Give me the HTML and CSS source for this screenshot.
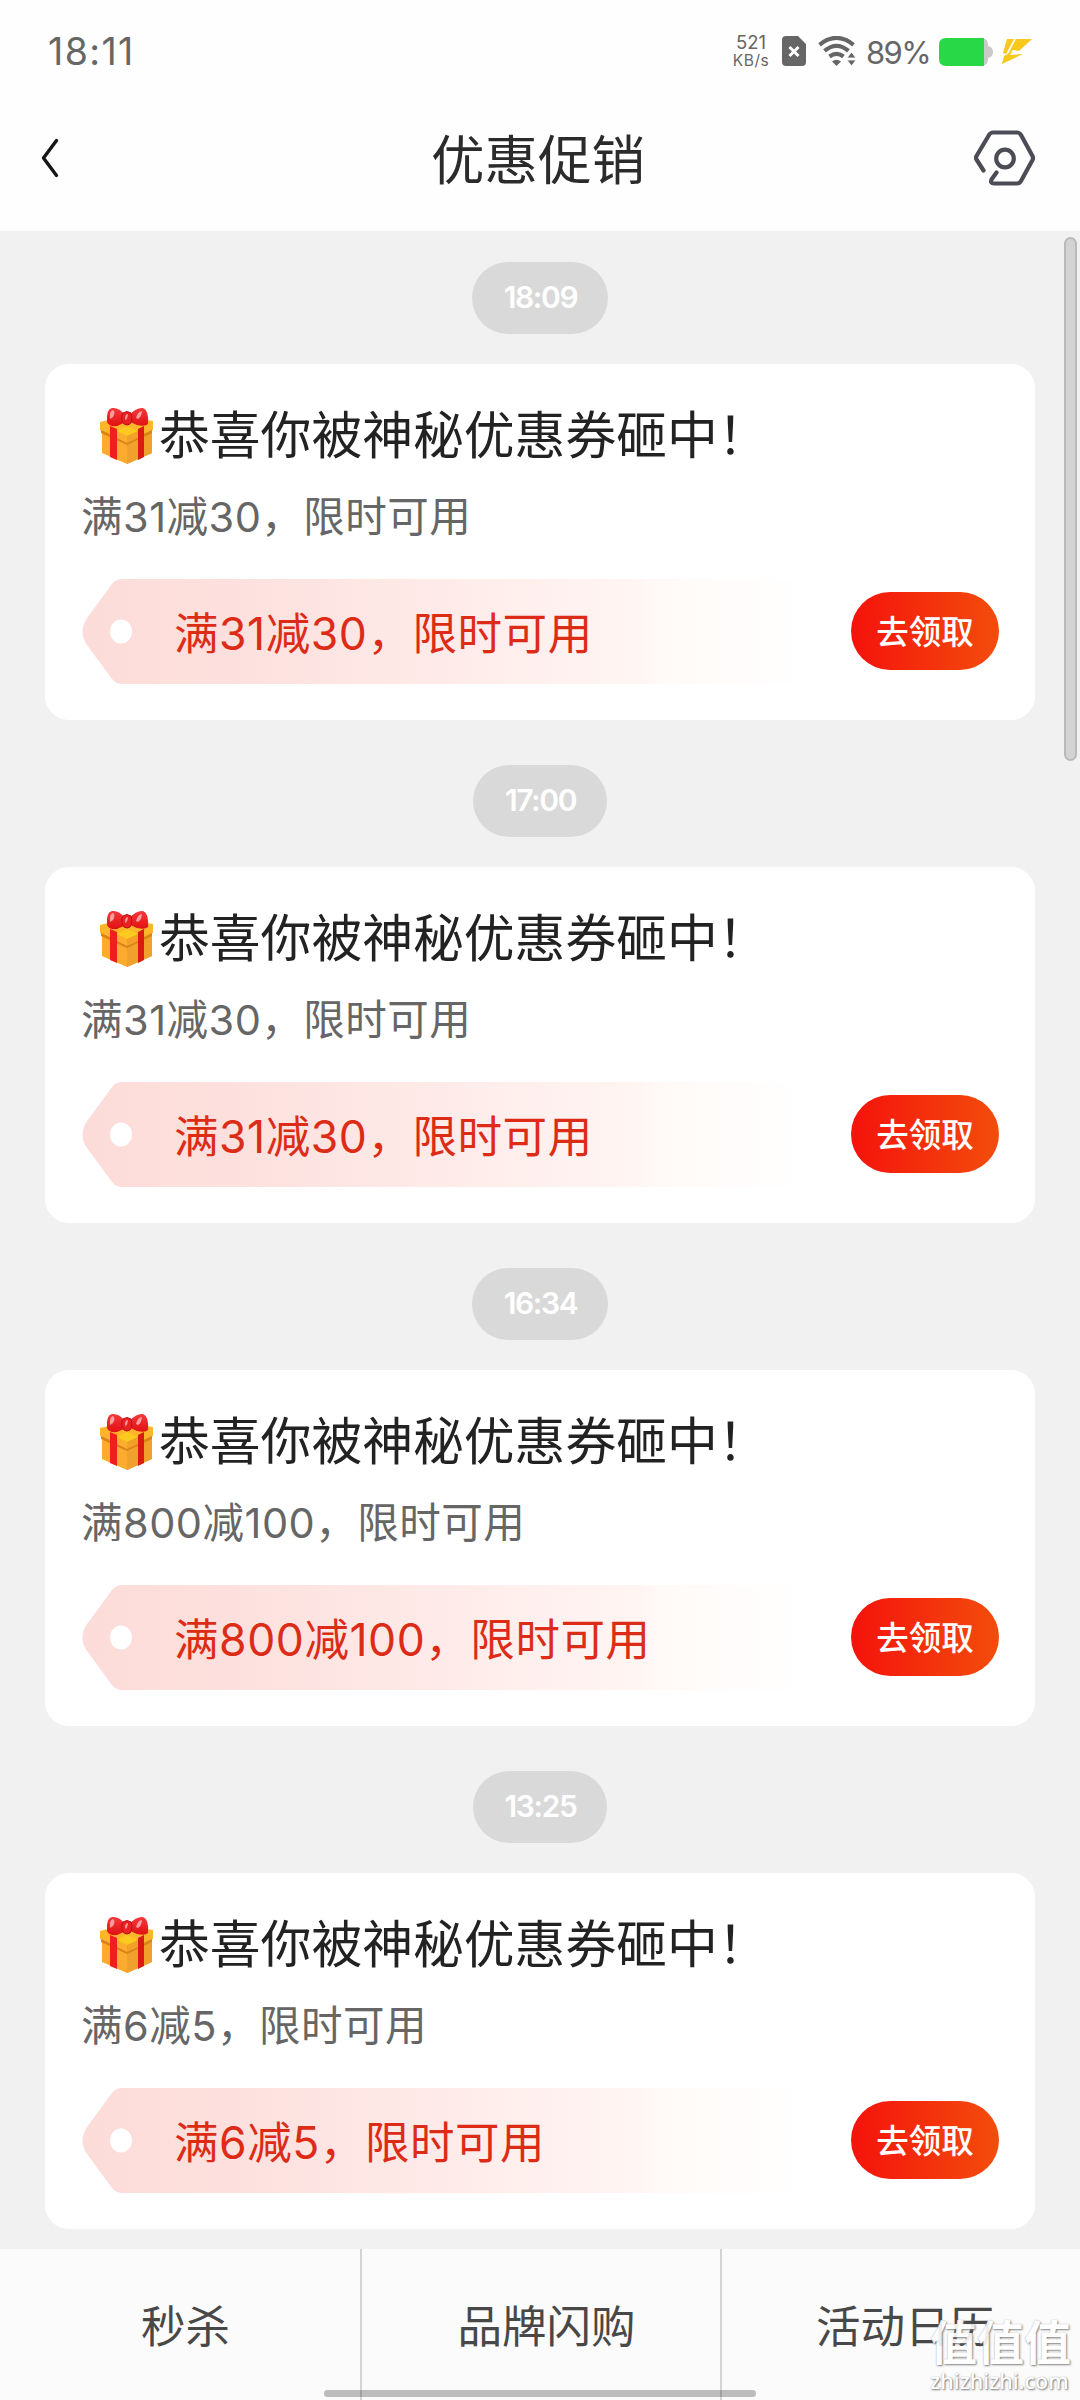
FILE: index.html
```html
<!DOCTYPE html>
<html lang="zh-CN">
<head>
<meta charset="utf-8">
<title>优惠促销</title>
<link rel="stylesheet" href="styles.css">
</head>
<body>
<svg class="defs" width="0" height="0" aria-hidden="true">
  <defs>
    <linearGradient id="fade" x1="0" x2="1" y1="0" y2="0">
      <stop offset="0" stop-color="#fcdcd9"/>
      <stop offset=".2" stop-color="#fde0dd"/>
      <stop offset=".5" stop-color="#feebe9"/>
      <stop offset=".76" stop-color="#fff5f3"/>
      <stop offset=".8" stop-color="#fffaf8"/>
      <stop offset="1" stop-color="#ffffff"/>
    </linearGradient>
    <linearGradient id="bow" x1="0" x2="0" y1="0" y2="1">
      <stop offset="0" stop-color="#f53a3c"/>
      <stop offset="1" stop-color="#e01012"/>
    </linearGradient>
    <symbol id="gift" viewBox="0 0 54 58">
      <path d="M2 20 27 10 52 20V46L27 57 2 46Z" fill="#fbac2c"/>
      <path d="M27 30V57L52 46V20Z" fill="#f0a02c"/>
      <path d="M0 15 24 9 53 14V23L27 35 0 23Z" fill="#fdb52b"/>
      <path d="M1 23 27 35 52 23V26L27 38 1 26Z" fill="#d98318"/>
      <path d="M10 19 17 22V53L10 50Z" fill="#f01f1b"/>
      <path d="M38 22 44 19V50L38 53Z" fill="#d91a17"/>
      <path d="M17 24 27 19 38 24 27 29Z" fill="#ffca1f"/>
      <path d="M17 24 27 29V36L17 31Z" fill="#fbae2c"/>
      <path d="M38 24 27 29V36L38 31Z" fill="#f3a029"/>
      <path d="M7 15Q6 2 12 1 19 0 25 8L29 8Q37 0 43 1 49 3 48 17 45 20 37 18L28 14 17 19Q9 20 7 15Z" fill="url(#bow)"/>
      <path d="M23 6Q27 3 31 6 33 13 30 17 27 19 24 17 20 12 23 6Z" fill="#ea2224" stroke="#bd1015" stroke-width="1"/>
      <path d="M10 12Q9 4 13 3 16 5 13 10ZM36 11Q38 4 42 4 42 9 38 12ZM25 12Q25 7 28 7 28 10 26 13Z" fill="#ff9c9d"/>
    </symbol>
    <symbol id="tag" viewBox="0 0 728 105">
      <path d="M40 0H728V105H40Q34 105 30 100L5 66Q-4 53 5 39L30 5Q34 0 40 0Z" fill="url(#fade)"/>
      <ellipse cx="39" cy="52.500" rx="11" ry="12" fill="#fff"/>
    </symbol>
  </defs>
</svg>

<div class="screen">
  <header class="top">
    <div class="status">
      <span class="clock">18:11</span>
      <div class="indicators">
        <div class="speed"><span>521</span><span class="unit">KB/s</span></div>
        <svg class="sim" viewBox="0 0 24 30"><path d="M4 0H16L24 8V26Q24 30 20 30H4Q0 30 0 26V4Q0 0 4 0Z" fill="#666"/><path d="M7.500 11 16.500 20M16.500 11 7.500 20" stroke="#fff" stroke-width="3"/></svg>
        <svg class="wifi" viewBox="0 0 38 30"><g fill="none" stroke="#666" stroke-width="4.200"><path d="M1.500 8.800Q18.500-5 35.500 8.800"/><path d="M6.500 14.800Q18.500 4.800 30.500 14.800"/><path d="M11.500 20.500Q18.500 15.300 25.500 20.500"/></g><path d="M14 25.500Q18.500 22 23 25.500L18.500 30Z" fill="#666"/><path d="M29 22H38L33.500 16ZM29 24H38L33.500 30Z" fill="#666" stroke="#fff" stroke-width=".8"/></svg>
        <span class="percent">89%</span>
        <svg class="battery" viewBox="0 0 54 28"><path d="M42 0Q49 0 49 7V8Q54 9 54 14T49 20V21Q49 28 42 28Z" fill="#c9c9c9"/><path d="M7 0H45V28H7Q0 28 0 21V7Q0 0 7 0Z" fill="#28d846"/></svg>
        <svg class="bolt" viewBox="0 0 30 25"><path d="M5 0H12L4 15 1 14ZM14 0H30L17 12 11 11 6 15ZM0 25 2 17 11 12 8 16 21 15Z" fill="#f8c81c"/></svg>
      </div>
    </div>
    <div class="navbar">
      <svg class="back" viewBox="0 0 20 42"><path d="M16.500 3.500 3.500 21 16.500 38.500" fill="none" stroke="#161616" stroke-width="3.400" stroke-linecap="round" stroke-linejoin="round"/></svg>
      <h1>优惠促销</h1>
      <svg class="settings" viewBox="0 0 62 56"><g fill="none" stroke="#4b4c55" stroke-width="4.200" stroke-linecap="round" stroke-linejoin="round"><path d="M9.500 40.500 2.500 29.500Q1.500 28 2.500 26L15 5Q16.500 2.500 19 2.500H43Q45.500 2.500 47 5L58.500 26Q59.500 28 58.500 30L47 51Q45.500 53.500 43 53.500H20Q16 53.500 17.500 49.500L22.500 42.500"/><circle cx="31" cy="28.500" r="8.800"/></g></svg>
    </div>
  </header>

  <main class="feed">
    <section class="message">
      <time class="stamp">18:09</time>
      <article class="card">
        <h2><svg class="gift"><use href="#gift"/></svg>恭喜你被神秘优惠券砸中！</h2>
        <p>满31减30，限时可用</p>
        <div class="coupon"><svg class="tag"><use href="#tag"/></svg><span class="offer">满31减30，限时可用</span><span class="claim">去领取</span></div>
      </article>
    </section>
    <section class="message">
      <time class="stamp">17:00</time>
      <article class="card">
        <h2><svg class="gift"><use href="#gift"/></svg>恭喜你被神秘优惠券砸中！</h2>
        <p>满31减30，限时可用</p>
        <div class="coupon"><svg class="tag"><use href="#tag"/></svg><span class="offer">满31减30，限时可用</span><span class="claim">去领取</span></div>
      </article>
    </section>
    <section class="message">
      <time class="stamp">16:34</time>
      <article class="card">
        <h2><svg class="gift"><use href="#gift"/></svg>恭喜你被神秘优惠券砸中！</h2>
        <p>满800减100，限时可用</p>
        <div class="coupon"><svg class="tag"><use href="#tag"/></svg><span class="offer">满800减100，限时可用</span><span class="claim">去领取</span></div>
      </article>
    </section>
    <section class="message">
      <time class="stamp">13:25</time>
      <article class="card">
        <h2><svg class="gift"><use href="#gift"/></svg>恭喜你被神秘优惠券砸中！</h2>
        <p>满6减5，限时可用</p>
        <div class="coupon"><svg class="tag"><use href="#tag"/></svg><span class="offer">满6减5，限时可用</span><span class="claim">去领取</span></div>
      </article>
    </section>
    <i class="scrollbar"></i>
  </main>

  <nav class="tabs">
    <a>秒杀</a>
    <a>品牌闪购</a>
    <a>活动日历</a>
  </nav>
  <i class="home-bar"></i>
  <div class="watermark"><b>值值值</b><span>zhizhizhi.com</span></div>
</div>
</body>
</html>
```
FILE: styles.css
```css
* { box-sizing: border-box; }

body {
  margin: 0;
  background: #f1f1f1;
  font-family: Inter, "Noto Sans CJK SC", sans-serif;
}

h1, h2, p { margin: 0; font-weight: 400; }
.defs { position: absolute; }

.screen {
  position: relative;
  display: flex;
  flex-direction: column;
  width: 1080px;
  height: 2400px;
  overflow: hidden;
}

/* Header */
.top { height: 231px; background: #fefefe; }

.status {
  display: flex;
  justify-content: space-between;
  height: 104px;
  padding: 0 48px;
  color: #666;
}

.clock { font-size: 37.500px; line-height: 103px; letter-spacing: 1.4px; }

.indicators { display: flex; align-items: center; height: 102px; }

.speed {
  display: flex;
  flex-direction: column;
  align-items: center;
  gap: 1px;
  width: 40px;
  font-size: 18.500px;
  line-height: 17px;
  white-space: nowrap;
}

.unit { font-size: 15.500px; letter-spacing: 0.6px; }
.sim { width: 24px; height: 30px; margin-left: 11px; }
.wifi { width: 38px; height: 30px; margin-left: 12px; }
.percent { width: 64px; margin-left: 10px; font-size: 31px; line-height: 40px; letter-spacing: -1.6px; padding-top: 3px; }
.battery { width: 54px; height: 28px; margin: 2px 0 0 9px; }
.bolt { width: 30px; height: 25px; margin: 0 0 0 9px; }

.navbar {
  display: flex;
  align-items: center;
  justify-content: space-between;
  height: 108px;
  padding: 0 44px 0 40px;
}

.back { width: 20px; height: 42px; margin-right: 42px; }
.navbar h1 { padding-top: 6px; color: #2b2b2b; font-size: 53.500px; line-height: 70px; }
.settings { width: 62px; height: 56px; }

/* Messages */
.feed {
  position: relative;
  flex: none;
  display: flex;
  flex-direction: column;
  gap: 45px;
  height: 2018px;
  padding: 31px 45px 0;
}

.message { display: flex; flex-direction: column; align-items: center; gap: 30px; }

.stamp {
  padding: 0 31px 0 32px;
  border-radius: 36px;
  background: #d9d9d9;
  color: #fff;
  font-size: 30px;
  font-weight: 600;
  line-height: 70px;
  height: 72px;
  letter-spacing: -1.400px;
}

.card {
  width: 990px;
  height: 356px;
  padding: 42px 36px 36px;
  border-radius: 24px;
  background: #fff;
}

.card h2 {
  display: flex;
  align-items: center;
  height: 60px;
  padding-left: 19px;
  color: #222;
  font-size: 50.800px;
  line-height: 64px;
}

.gift { width: 54px; height: 58px; margin-right: 5px; }

.card p { margin-top: 26px; color: #666; font-size: 41.500px; line-height: 51px; height: 50px; letter-spacing: .5px; }

.coupon {
  position: relative;
  display: flex;
  align-items: center;
  justify-content: space-between;
  height: 105px;
  margin-top: 37px;
  padding-left: 93px;
}

.tag { position: absolute; left: 1px; top: 0; width: 728px; height: 105px; }
.offer { position: relative; padding-top: 4px; color: #dc2c18; font-size: 44.500px; line-height: 60px; letter-spacing: .55px; }

.claim {
  width: 148px;
  height: 78px;
  margin-bottom: 2px;
  border-radius: 39px;
  background: linear-gradient(90deg, #f5120c, #f34d0c);
  color: #fff;
  font-size: 32.500px;
  font-weight: 500;
  line-height: 81px;
  text-align: center;
}

.scrollbar {
  position: absolute;
  top: 6px;
  right: 3px;
  width: 13px;
  height: 524px;
  border: 2px solid #bababa;
  border-radius: 7px;
  background: #d3d3d3;
}

/* Bottom tabs */
.tabs {
  display: grid;
  grid-template-columns: 360px 360px 1fr;
  height: 151px;
  background: #fbfbfb;
}

.tabs a {
  padding-left: 11px;
  color: #484848;
  font-size: 44.500px;
  line-height: 157px;
  text-align: center;
}

.tabs a + a { border-left: 2px solid #d4d4d4; }
.tabs a:last-child { padding-left: 8px; }

.home-bar {
  position: absolute;
  left: 324px;
  bottom: 3px;
  width: 432px;
  height: 7px;
  border-radius: 4px;
  background: rgba(0, 0, 0, .25);
}

.watermark {
  position: absolute;
  right: 8px;
  bottom: 7px;
  display: flex;
  flex-direction: column;
  width: 142px;
  color: #fff;
  font-family: "Noto Sans", "Noto Sans CJK SC", sans-serif;
  text-shadow: 1px 1px 2px #777, 0 0 1px #aaa;
}

.watermark b { font-size: 47px; font-weight: 700; line-height: 54px; white-space: nowrap; opacity: .9; }
.watermark span { font-size: 21.500px; font-weight: 500; line-height: 24px; white-space: nowrap; }
```
